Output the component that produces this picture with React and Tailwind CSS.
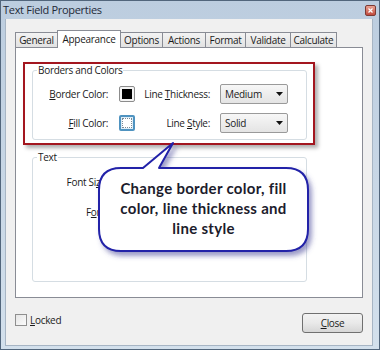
import React from 'react';

const ui = "font-['Open_Sans',sans-serif] text-[10px] tracking-[-0.3px] text-[#1b1b1b]";

const Key = ({ children }) => <span className="underline underline-offset-[1px]">{children}</span>;

const Select = ({ value, className = '' }) => (
  <div className={`flex h-[20px] w-[68px] items-center rounded-[2px] border border-[#9a9a9a] bg-linear-to-b from-[#f7f7f7] to-[#e4e4e4] ${className}`}>
    <span className="flex-1 pl-[4px] leading-none">{value}</span>
    <span className="flex h-full w-[16px] items-center justify-center">
      <svg width="7" height="4" viewBox="0 0 7 4">
        <path d="M0 0h7L3.5 4z" fill="#111" />
      </svg>
    </span>
  </div>
);

const Tab = ({ label, w, active, first }) =>
  active ? (
    <div className={`relative z-10 -ml-px flex h-[18px] ${w} items-center justify-center border border-b-0 border-[#898c95] bg-white`}>
      {label}
    </div>
  ) : (
    <div className={`mt-[2px] flex h-[15px] ${w} ${first ? '' : '-ml-px'} items-center justify-center border border-b-0 border-[#898c95] bg-linear-to-b from-[#f3f3f3] to-[#e2e2e2]`}>
      {label}
    </div>
  );

export default function App() {
  return (
    <div className={`relative h-[350px] w-[380px] overflow-hidden border border-[#52667c] bg-linear-to-b from-[#bccddf] to-[#d3e0ec] ${ui}`}>
      {/* title bar */}
      <div className="flex h-[18px] items-center justify-between pl-[2px] pr-[3px]">
        <span className="text-[11px] text-[#1e2a38]">Text Field Properties</span>
        <div className="flex h-[11px] w-[11px] items-center justify-center rounded-[2px] border border-[#7d3a33] bg-linear-to-b from-[#eaa394] to-[#c0493d]">
          <svg width="5" height="5" viewBox="0 0 5 5">
            <path d="M0.5 0.5l4 4M4.5 0.5l-4 4" stroke="#fff" strokeWidth="1.2" />
          </svg>
        </div>
      </div>

      {/* client area */}
      <div className="ml-[4px] mr-[6px] h-[327px] border-x border-b border-[#a7b5c4] bg-[#f0f0f0]">
        <div className="flex items-start pl-[9px] pt-[11px] -mb-px">
          <Tab label="General" w="w-[43px]" first />
          <Tab label="Appearance" w="w-[64px]" active />
          <Tab label="Options" w="w-[43px]" />
          <Tab label="Actions" w="w-[44px]" />
          <Tab label="Format" w="w-[41px]" />
          <Tab label="Validate" w="w-[46px]" />
          <Tab label="Calculate" w="w-[47px]" />
        </div>

        <div className="ml-[9px] h-[251px] w-[348px] border border-[#898c95] bg-white">
          {/* highlighted group */}
          <div className="ml-[7px] mt-[14px] h-[83px] w-[292px] border-2 border-[#a3161f] shadow-[3px_3px_4px_rgba(0,0,0,0.32)]">
            <fieldset className="ml-[7px] h-[76px] w-[275px] rounded-[3px] border border-[#d5dde3]">
              <legend className="ml-[4px] px-[1px] leading-[12px]">Borders and Colors</legend>
              <div className="flex flex-col gap-[9px] pt-[8px]">
                <div className="flex h-[20px] items-center">
                  <span className="w-[75px] text-right"><Key>B</Key>order Color:</span>
                  <div className="ml-[11px] flex h-[16px] w-[16px] items-center justify-center rounded-[2px] border border-[#8c8c8c] bg-[#f4f4f4]">
                    <div className="h-[10px] w-[10px] bg-black" />
                  </div>
                  <span className="w-[75px] text-right">Line <Key>T</Key>hickness:</span>
                  <Select value="Medium" className="ml-[10px]" />
                </div>
                <div className="flex h-[20px] items-center">
                  <span className="w-[75px] text-right"><Key>F</Key>ill Color:</span>
                  <div className="ml-[11px] flex h-[16px] w-[16px] items-center justify-center rounded-[2px] border-2 border-[#4f93c0] bg-[#dcecf7]">
                    <div className="h-[10px] w-[10px] border border-dotted border-[#7a8a96] bg-white" />
                  </div>
                  <span className="w-[75px] text-right">Line <Key>S</Key>tyle:</span>
                  <Select value="Solid" className="ml-[10px]" />
                </div>
              </div>
            </fieldset>
          </div>

          {/* text group */}
          <fieldset className="ml-[16px] mt-[6px] h-[131px] w-[275px] rounded-[3px] border border-[#d5dde3]">
            <legend className="ml-[4px] px-[1px] leading-[12px]">Text</legend>
            <div className="flex flex-col gap-[10px] pt-[9px]">
              <div className="flex h-[20px] items-center">
                <span className="w-[75px] text-right">Font Si<Key>z</Key>e:</span>
              </div>
              <div className="flex h-[20px] items-center">
                <span className="w-[75px] text-right">F<Key>o</Key>nt:</span>
              </div>
            </div>
          </fieldset>
        </div>

        {/* bottom row */}
        <div className="mt-[15px] flex items-start justify-between px-[9px]">
          <label className="flex h-[14px] items-center gap-[3px]">
            <span className="h-[12px] w-[12px] border border-[#8f8f8f] bg-linear-to-br from-[#e6e6e6] to-[#fbfbfb]" />
            <span><Key>L</Key>ocked</span>
          </label>
          <button className="flex h-[20px] w-[61px] items-center justify-center rounded-[3px] border border-[#707070] bg-linear-to-b from-[#f3f3f3] via-[#e9e9e9] to-[#d6d6d6]">
            <span><Key>C</Key>lose</span>
          </button>
        </div>
      </div>

      {/* callout bubble */}
      <svg className="pointer-events-none absolute left-0 top-0" width="380" height="350" viewBox="0 0 380 350">
        <defs>
          <filter id="sh" x="-10%" y="-20%" width="130%" height="150%">
            <feDropShadow dx="3" dy="4" stdDeviation="2.5" floodColor="#4a4a9a" floodOpacity="0.55" />
          </filter>
        </defs>
        <path
          d="M120 167 L142 167 L172 142 L158 167 L285 167 Q307 167 307 189 L307 228 Q307 250 285 250 L120 250 Q98 250 98 228 L98 189 Q98 167 120 167 Z"
          fill="#fff"
          stroke="#2020a8"
          strokeWidth="2"
          strokeLinejoin="round"
          filter="url(#sh)"
        />
      </svg>
      <div className="absolute left-[98px] top-[167px] flex h-[83px] w-[209px] flex-col items-center justify-center pb-[3px] font-['Lato',sans-serif] text-[15px] font-bold leading-[20px] tracking-[0.3px] text-[#1c1c2c]">
        <span>Change border color, fill</span>
        <span>color, line thickness and</span>
        <span>line style</span>
      </div>
    </div>
  );
}
